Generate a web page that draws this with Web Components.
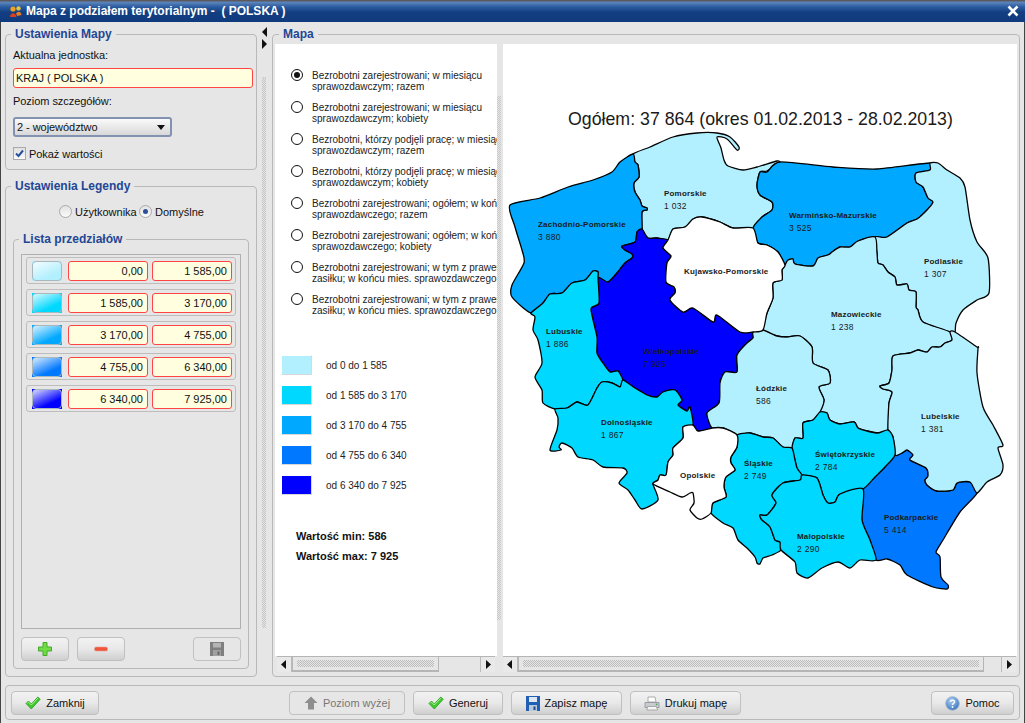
<!DOCTYPE html>
<html lang="pl">
<head>
<meta charset="utf-8">
<title>Mapa z podziałem terytorialnym</title>
<style>
html, body { margin: 0; padding: 0; background: #e6e6e6; }
body { width: 1025px; height: 723px; overflow: hidden; font: 11px "Liberation Sans", sans-serif; color: #111; }
</style>
</head>
<body>
<app-window caption="Mapa z podziałem terytorialnym -  ( POLSKA )">
  <div slot="left" style="display:flex;flex-direction:column;gap:9px;height:100%">
    <group-box caption="Ustawienia Mapy" style="height:143px">
      <settings-map></settings-map>
    </group-box>
    <group-box caption="Ustawienia Legendy" style="flex:1;min-height:0">
      <settings-legend></settings-legend>
    </group-box>
  </div>
  <group-box slot="right" caption="Mapa" style="height:100%" tight>
    <map-panel></map-panel>
  </group-box>
  <footer-bar slot="footer"></footer-bar>
</app-window>

<script>
const FONT = '"Liberation Sans", sans-serif';

// icons used by the buttons
const ICONS = {
  check: `<svg width="16" height="14" viewBox="0 0 16 14"><path d="M1 7.5 L3.5 5 L6.3 8 L12.8 1 L15.2 3.3 L6.3 13 Z" fill="#3fc92f" stroke="#2a9a22" stroke-width=".8" stroke-linejoin="round"/><path d="M2.5 7.2 L3.6 6.2 L6.3 9 L12.8 2.2" fill="none" stroke="#a6f08f" stroke-width="1"/></svg>`,
  plus: `<svg width="16" height="16" viewBox="0 0 16 16"><path d="M6 1.5 H10 V6 H14.5 V10 H10 V14.5 H6 V10 H1.5 V6 H6 Z" fill="#6fdc45" stroke="#45a82b" stroke-linejoin="round"/></svg>`,
  minus: `<svg width="16" height="16" viewBox="0 0 16 16"><rect x="1.5" y="6" width="13" height="4" rx="1.5" fill="#f2553c" stroke="#e0a090" stroke-width=".6"/></svg>`,
  disk: `<svg width="14" height="14" viewBox="0 0 14 14"><path d="M0 0 H14 V14 H0 Z" fill="#7f7f7f"/><rect x="3" y="1" width="8" height="4.5" fill="#b4b4b4"/><rect x="3" y="8" width="8" height="6" fill="#a0a0a0"/><rect x="7.5" y="9.5" width="2" height="3.5" fill="#666"/></svg>`,
  diskBlue: `<svg width="14" height="15" viewBox="0 0 14 15"><path d="M0 0 H14 V15 H0 Z" fill="#1f5fb4"/><rect x="3" y="1" width="8" height="5" fill="#dfe8f2"/><rect x="3" y="9" width="8" height="6" fill="#b8c8da"/><rect x="7.5" y="10.5" width="2" height="3.5" fill="#1b4a8c"/></svg>`,
  up: `<svg width="14" height="14" viewBox="0 0 14 14"><path d="M7 .5 L13.5 7 H10 V13.5 H4 V7 H.5 Z" fill="#8e8e8e"/></svg>`,
  printer: `<svg width="16" height="15" viewBox="0 0 16 15"><path d="M4 1 L11 1 L12 6 H4 Z" fill="#fff" stroke="#9a9a9a" stroke-width=".8"/><path d="M1 6.5 H15 V11.5 H1 Z" fill="#c7ccd0" stroke="#8a8f94" stroke-width=".8"/><path d="M3.5 10.5 H12.5 L13.5 14 H3 Z" fill="#f5f5f5" stroke="#9a9a9a" stroke-width=".8"/><circle cx="12.6" cy="8.3" r=".9" fill="#5a9a5a"/></svg>`,
  help: `<svg width="15" height="15" viewBox="0 0 15 15"><defs><radialGradient id="hb" cx=".4" cy=".3" r=".8"><stop offset="0" stop-color="#a9cdf2"/><stop offset="1" stop-color="#2f6db8"/></radialGradient></defs><circle cx="7.5" cy="7.5" r="6.8" fill="url(#hb)" stroke="#9db6d0"/><path d="M5.4 5.8 C5.6 3.6 9.6 3.6 9.6 5.8 C9.6 7.4 7.5 7.2 7.5 9" fill="none" stroke="#fff" stroke-width="1.5"/><circle cx="7.5" cy="11" r=".95" fill="#fff"/></svg>`
};

class AppWindow extends HTMLElement {
  constructor() {
    super();
    this.attachShadow({ mode: "open" }).innerHTML = `
<style>
:host { display: flex; flex-direction: column; width: 1025px; height: 723px; box-sizing: border-box; background: #e6e6e6; border-left: 1px solid #444; border-right: 1px solid #444; }
.title { height: 22px; flex: none; display: flex; align-items: center; color: #fff; font: bold 12px ${FONT}; white-space: pre; padding: 0 5px 0 9px; gap: 4px;
  background: linear-gradient(#59595f 0, #59595f 1px, #5e87bd 2px, #2a5b9f 7px, #133f82 12px, #0f3a7c 22px); margin-left: -1px; margin-right: -1px; }
.title span { flex: 1; }
.main { flex: 1; display: flex; min-height: 0; padding: 5px 4px 0 4px; }
.left { width: 252px; flex: none; padding-bottom: 8px; }
.split { width: 15px; flex: none; position: relative; }
.split::before { content: ""; display: block; width: 0; height: 0; margin: 0 0 2px 5px; border: 5px solid transparent; border-left: 0; border-right: 5px solid #111; }
.split::after { content: ""; display: block; width: 0; height: 0; margin: 0 0 0 5px; border: 5px solid transparent; border-right: 0; border-left: 5px solid #111; }
.dots { position: absolute; left: 5px; top: 50px; width: 4px; bottom: 57px; background: repeating-conic-gradient(#c4c4c4 0 25%, transparent 0 50%) 0 0 / 2px 2px; }
.right { flex: 1; min-width: 0; padding-bottom: 8px; }
.foot { height: 38px; flex: none; padding: 0 4px 3px; box-sizing: border-box; }
</style>
<div class="title">
  <svg width="13" height="13" viewBox="0 0 13 13"><circle cx="4" cy="4" r="2.6" fill="#f0a020"/><circle cx="9.5" cy="3.4" r="2.2" fill="#e9c53c"/><path d="M1 12 C1 7 7 7 7.5 12 Z" fill="#d8401f"/><path d="M7 9 C8 6 12 6 12.5 10 L8.5 11 Z" fill="#e87a20"/></svg>
  <span>${this.getAttribute("caption")}</span>
  <svg width="14" height="14" viewBox="0 0 14 14"><path d="M2.5 2.5 L11.5 11.5 M11.5 2.5 L2.5 11.5" stroke="#fff" stroke-width="2.6" fill="none"/></svg>
</div>
<div class="main">
  <div class="left"><slot name="left"></slot></div>
  <div class="split"><div class="dots"></div></div>
  <div class="right"><slot name="right"></slot></div>
</div>
<div class="foot"><slot name="footer"></slot></div>`;
  }
}
customElements.define("app-window", AppWindow);

class GroupBox extends HTMLElement {
  constructor() {
    super();
    const tight = this.hasAttribute("tight");
    this.attachShadow({ mode: "open" }).innerHTML = `
<style>
:host { display: block; box-sizing: border-box; }
fieldset { margin: 0; height: 100%; box-sizing: border-box; border: 1px solid #b9b9b9; border-radius: 4px; min-width: 0; padding: ${tight ? "0 2px 3px 2px" : "0 7px 7px 7px"}; }
legend { padding: 0 4px; margin-left: ${tight ? "4px" : "-2px"}; font: bold 12px ${FONT}; color: #1f4795; line-height: 14px; }
</style>
<fieldset><legend>${this.getAttribute("caption")}</legend><slot></slot></fieldset>`;
  }
}
customElements.define("group-box", GroupBox);

class TextField extends HTMLElement {
  constructor() {
    super();
    this.attachShadow({ mode: "open" }).innerHTML = `
<style>
:host { display: block; box-sizing: border-box; height: 20px; background: #ffffdf; border: 1px solid #f44; border-radius: 3px; padding: 0 2px; font: 11px/18px ${FONT}; white-space: nowrap; overflow: hidden; }
:host([num]) { text-align: right; padding-right: 4px; }
</style><slot></slot>`;
  }
}
customElements.define("text-field", TextField);

class CheckRadio extends HTMLElement {
  constructor() {
    super();
    const on = this.hasAttribute("on");
    this.attachShadow({ mode: "open" }).innerHTML = `
<style>
:host { display: inline-flex; align-items: center; gap: 3px; font: 11px ${FONT}; }
i { display: block; width: 13px; height: 13px; box-sizing: border-box; border: 1px solid #a9a9a9; border-radius: 50%; background: linear-gradient(#e2e2e2, #fafafa); position: relative; }
i.on::after { content: ""; position: absolute; left: 3px; top: 3px; width: 5px; height: 5px; border-radius: 50%; background: #2d4f9a; }
</style><i class="${on ? "on" : ""}"></i><slot></slot>`;
  }
}
customElements.define("check-radio", CheckRadio);

class SettingsMap extends HTMLElement {
  constructor() {
    super();
    this.attachShadow({ mode: "open" }).innerHTML = `
<style>
:host { display: block; font: 11px ${FONT}; letter-spacing: -.05px; padding-top: 6px; margin-right: -4px; }
label { display: block; line-height: 16px; }
.sel { width: 159px; height: 20px; box-sizing: border-box; margin: 8px 0 0; border: 2px solid #8392b0; border-radius: 3px; display: flex; align-items: center; justify-content: space-between; padding: 0 5px 0 2px; background: linear-gradient(#fafafa, #d8d8d8); }
.sel b { width: 0; height: 0; border: 4px solid transparent; border-top: 5px solid #111; border-bottom: 0; }
.chk { display: flex; align-items: center; gap: 3px; margin-top: 10px; }
.chk i { width: 13px; height: 13px; box-sizing: border-box; border: 1px solid #aaa; background: linear-gradient(#e0e0e0, #fafafa); display: block; }
.chk svg { display: block; margin: 1px; }
text-field { margin: 5px 0 5px; }
</style>
<label>Aktualna jednostka:</label>
<text-field>KRAJ ( POLSKA )</text-field>
<label style="margin-top:4px">Poziom szczegółów:</label>
<div class="sel"><span>2 - województwo</span><b></b></div>
<div class="chk"><i><svg width="9" height="9" viewBox="0 0 9 9"><path d="M1 4.5 L3.5 7 L8 1.5" fill="none" stroke="#27519c" stroke-width="2"/></svg></i><span>Pokaż wartości</span></div>`;
  }
}
customElements.define("settings-map", SettingsMap);

class RangeRow extends HTMLElement {
  constructor() {
    super();
    const c = this.getAttribute("color");
    this.attachShadow({ mode: "open" }).innerHTML = `
<style>
:host { display: flex; align-items: center; gap: 6px; height: 27px; flex: none; box-sizing: border-box; border: 1px solid #bdbdbd; border-radius: 3px; padding: 0 3px 0 5px; }
.sw { width: 30px; height: 20px; box-sizing: border-box; background: ${c}; }
.sw div { height: 100%; box-sizing: border-box; border: 1px solid #a8b8bc; border-radius: 4px; background: linear-gradient(155deg, rgba(255,255,255,.85) 0%, rgba(255,255,255,0) 70%); }
text-field { width: 80px; }
.f2 { margin-left: -2px; }
</style>
<div class="sw"><div></div></div>
<text-field num>${this.getAttribute("a")}</text-field>
<text-field num class="f2">${this.getAttribute("b")}</text-field>`;
  }
}
customElements.define("range-row", RangeRow);

class IconButton extends HTMLElement {
  constructor() {
    super();
    const off = this.hasAttribute("off");
    this.attachShadow({ mode: "open" }).innerHTML = `
<style>
:host { display: flex; align-items: center; justify-content: center; gap: 5px; box-sizing: border-box; height: 24px; flex: none; border: 1px solid #c0c0c0; border-radius: 4px; font: 11px ${FONT}; color: ${off ? "#777" : "#111"}; background: ${off ? "none" : "linear-gradient(#f2f2f2, #e8e8e8 50%, #cfcfcf)"}; white-space: nowrap; }
svg { display: block; }
</style>${ICONS[this.getAttribute("icon")]}<slot></slot>`;
  }
}
customElements.define("icon-button", IconButton);

class SettingsLegend extends HTMLElement {
  constructor() {
    super();
    const ranges = [
      ["#b3f0ff", "0,00", "1 585,00"], ["#00d8ff", "1 585,00", "3 170,00"],
      ["#00a8ff", "3 170,00", "4 755,00"], ["#0078ff", "4 755,00", "6 340,00"],
      ["#0000ff", "6 340,00", "7 925,00"]
    ];
    this.attachShadow({ mode: "open" }).innerHTML = `
<style>
:host { display: block; font: 11px ${FONT}; }
.radios { display: flex; padding: 12px 0 14px 46px; }
.radios check-radio:first-child { width: 80px; }
group-box { height: 437px; }
.wrap { padding-top: 8px; }
.list { height: 375px; box-sizing: border-box; border: 1px solid #b0b0b0; padding: 2px 4px; display: flex; flex-direction: column; gap: 5px; }
.btns { display: flex; gap: 8px; margin-top: 8px; }
.btns icon-button { width: 48px; }
.btns icon-button:last-child { margin-left: auto; }
</style>
<div class="radios"><check-radio>Użytkownika</check-radio><check-radio on>Domyślne</check-radio></div>
<group-box caption="Lista przedziałów">
  <div class="wrap">
    <div class="list">${ranges.map(r => `<range-row color="${r[0]}" a="${r[1]}" b="${r[2]}"></range-row>`).join("")}</div>
    <div class="btns"><icon-button icon="plus"></icon-button><icon-button icon="minus"></icon-button><icon-button icon="disk" off></icon-button></div>
  </div>
</group-box>`;
  }
}
customElements.define("settings-legend", SettingsLegend);

class HScroll extends HTMLElement {
  constructor() {
    super();
    const arrow = d => `<svg width="7" height="9" viewBox="0 0 7 9"><path d="${d}" fill="#111"/></svg>`;
    this.attachShadow({ mode: "open" }).innerHTML = `
<style>
:host { display: flex; height: 16px; flex: none; box-sizing: border-box; border-top: 1px solid #b5b5b5; background: #e6e6e6; }
.b { width: 15px; flex: none; display: flex; align-items: center; justify-content: center; background: #e9e9e9; box-sizing: border-box; border-right: 1px solid #bbb; }
.b:last-child { border-right: 0; border-left: 1px solid #bbb; }
.track { flex: 1; display: flex; min-width: 0; }
.thumb { box-sizing: border-box; border: 1px solid #b5b5b5; border-top: 0; border-bottom-width: 2px; padding: 3px 4px; }
.thumb div { height: 100%; background: repeating-conic-gradient(#bdbdbd 0 25%, transparent 0 50%) 0 0 / 2px 2px; }
</style>
<div class="b">${arrow("M5 0 V9 L0 4.5 Z")}</div>
<div class="track"><div class="thumb" style="width:${this.getAttribute("thumb")}"><div></div></div></div>
<div class="b">${arrow("M1 0 V9 L6 4.5 Z")}</div>`;
  }
}
customElements.define("h-scroll", HScroll);

class MeasureList extends HTMLElement {
  constructor() {
    super();
    const items = [
      ["Bezrobotni zarejestrowani; w miesiącu", "sprawozdawczym; razem"],
      ["Bezrobotni zarejestrowani; w miesiącu", "sprawozdawczym; kobiety"],
      ["Bezrobotni, którzy podjęli pracę; w miesiącu", "sprawozdawczym; razem"],
      ["Bezrobotni, którzy podjęli pracę; w miesiącu", "sprawozdawczym; kobiety"],
      ["Bezrobotni zarejestrowani; ogółem; w końcu mies.", "sprawozdawczego; razem"],
      ["Bezrobotni zarejestrowani; ogółem; w końcu mies.", "sprawozdawczego; kobiety"],
      ["Bezrobotni zarejestrowani; w tym z prawem do", "zasiłku; w końcu mies. sprawozdawczego"],
      ["Bezrobotni zarejestrowani; w tym z prawem do", "zasiłku; w końcu mies. sprawozdawczego"]
    ];
    const legend = [["#b3f0ff", "od 0 do 1 585"], ["#00d8ff", "od 1 585 do 3 170"], ["#00a8ff", "od 3 170 do 4 755"], ["#0078ff", "od 4 755 do 6 340"], ["#0000ff", "od 6 340 do 7 925"]];
    this.attachShadow({ mode: "open" }).innerHTML = `
<style>
:host { display: block; height: 100%; box-sizing: border-box; overflow: hidden; padding: 26px 0 0 6px; font: 10px/11px "Liberation Sans", sans-serif; color: #222; white-space: nowrap; }
.opts { display: flex; flex-direction: column; gap: 10px; padding-left: 10px; }
.opt { display: flex; gap: 9px; align-items: flex-start; }
.opt i { width: 12px; height: 12px; margin-top: -1px; flex: none; box-sizing: border-box; border: 1px solid #111; border-radius: 50%; position: relative; }
.opt i.on::after { content: ""; position: absolute; left: 2px; top: 2px; width: 6px; height: 6px; border-radius: 50%; background: #111; }
.legend { margin-top: 39px; display: flex; flex-direction: column; gap: 10px; }
.row { display: flex; align-items: center; gap: 14px; height: 20px; }
.row u { display: block; width: 31px; height: 20px; box-sizing: border-box; border: 1px solid; border-color: transparent #d8d8d8 #d8d8d8 transparent; background-clip: padding-box; }
.min { margin: 31px 0 0 15px; font-weight: bold; font-size: 11px; line-height: 20px; color: #111; }
</style>
<div class="opts">${items.map((t, i) => `<div class="opt"><i class="${i ? "" : "on"}"></i><div>${t[0]}<br>${t[1]}</div></div>`).join("")}</div>
<div class="legend">${legend.map(l => `<div class="row"><u style="background-color:${l[0]}"></u><span>${l[1]}</span></div>`).join("")}</div>
<div class="min">Wartość min: 586<br>Wartość max: 7 925</div>`;
  }
}
customElements.define("measure-list", MeasureList);

// region outlines in window pixels; the svg viewBox starts at the map panel corner
const C0 = "#b3f0ff", C1 = "#00d8ff", C2 = "#00a8ff", C3 = "#0078ff", C4 = "#0000ff";
const REGIONS = [
  [C0, "Pomorskie", "1 032", 664, 195, "633,154 650,147 673,137 697,133 717,133 730,137 739,147 737,150 727,139 717,137 721,148 724,160 728,166 743,170 757,167 777,161 779,163 767,171 760,172 757,185 760,195 772,202 772,210 762,217 753,228 733,228 720,222 702,217 693,219 685,227 673,229 668,240 657,238 648,238 642,229 642,212 647,210 647,208 642,206 640,200 635,192 634,183 639,177 638,165 635,162"],
  [C2, "Zachodnio-Pomorskie", "3 880", 538, 226, "510,205 540,198 568,187 593,180 612,172 620,162 633,154 635,162 638,165 639,177 634,183 635,192 640,200 642,206 647,208 647,210 642,212 642,229 637,232 635,242 622,246 625,250 632,254 632,258 625,263 617,273 608,282 598,278 598,272 593,271 585,280 572,283 562,293 550,294 543,303 531,313 512,297 512,285 524,263 522,250 515,227"],
  [C2, "Warmińsko-Mazurskie", "3 525", 789, 217, "780,162 833,167 877,169 930,163 930,170 916,173 916,182 923,187 928,198 933,202 927,210 917,219 907,223 887,237 875,237 858,241 850,247 840,247 832,252 828,255 818,258 813,266 795,264 793,259 788,260 785,265 778,252 767,245 758,243 753,228 762,217 772,210 772,202 760,195 757,185 760,172 767,172"],
  [C0, "Podlaskie", "1 307", 924, 263, "930,163 938,163 947,170 960,178 965,187 970,220 977,242 988,258 989,293 977,300 963,310 956,323 955,332 950,332 923,322 918,310 916,307 916,292 909,290 907,284 897,285 895,277 888,272 883,265 878,263 877,253 875,237 887,237 907,223 917,219 927,210 933,202 928,198 923,187 916,182 916,173 930,170"],
  [C0, "Mazowieckie", "1 238", 831, 316, "785,265 788,260 793,259 795,264 813,266 818,258 828,255 832,252 840,247 850,247 858,241 875,237 877,253 878,263 883,265 888,272 895,277 897,285 907,284 909,290 916,292 916,307 918,310 923,322 950,332 952,340 945,343 940,347 932,347 927,352 918,350 910,353 893,356 892,370 889,383 880,386 883,389 892,392 889,403 888,430 878,433 867,431 858,428 854,422 840,424 830,420 827,413 820,412 824,400 819,387 830,383 828,370 813,363 812,347 800,336 787,337 777,336 763,330 767,313 773,298 773,283 782,280 782,270"],
  [C4, "Wielkopolskie", "7 925", 643, 353, "642,229 648,238 657,238 668,240 663,248 671,256 667,263 666,282 674,287 675,293 670,300 683,312 693,308 713,322 717,315 740,332 753,332 753,338 747,343 737,355 737,372 725,372 720,383 719,403 707,413 712,428 698,431 693,425 690,407 687,411 678,405 682,400 675,390 663,392 657,397 647,395 635,388 623,380 618,371 610,372 603,363 597,353 597,337 591,309 599,303 598,278 608,282 617,273 625,263 632,258 632,254 625,250 622,246 635,242 637,232"],
  [C1, "Lubuskie", "1 886", 546, 333, "531,313 543,303 550,294 562,293 572,283 585,280 593,271 598,272 598,278 599,303 591,309 597,337 597,353 603,363 610,372 618,371 623,380 623,387 620,387 612,383 602,382 597,388 588,405 577,402 567,408 555,409 543,403 542,390 535,377 542,363 538,340 533,330 535,317"],
  [C1, "Dolnośląskie", "1 867", 601, 424, "555,409 567,408 577,402 588,405 597,388 602,382 612,383 620,387 623,380 635,388 647,395 657,397 663,392 675,390 682,400 678,405 687,411 690,407 693,425 683,427 683,438 673,448 673,455 668,462 666,475 660,475 658,480 653,484 658,500 642,509 635,500 628,490 619,483 627,473 623,468 603,467 593,460 578,457 572,448 562,443 559,447 561,450 550,450 557,430 558,418"],
  [C3, "Podkarpackie", "5 414", 884, 519, "895,455 902,453 907,450 913,455 910,460 926,468 928,476 925,480 927,485 937,491 953,490 957,483 970,482 977,493 960,512 943,540 936,552 940,557 941,577 948,585 947,589 933,587 907,575 900,565 887,559 876,560 870,540 862,520 863,489 875,477 885,467"],
  [C0, "Lubelskie", "1 381", 921, 418, "955,332 977,347 978,348 977,373 983,407 993,425 1003,445 998,448 1003,465 1000,475 987,482 977,493 970,482 957,483 953,490 937,491 927,485 925,480 928,476 926,468 910,460 913,455 907,450 902,453 895,455 893,437 888,430 889,403 892,392 883,389 880,386 889,383 892,370 893,356 910,353 918,350 927,352 932,347 940,347 945,343 952,340 950,332"],
  [C0, "Łódzkie", "586", 756, 390, "763,330 777,336 787,337 800,336 812,347 813,363 828,370 830,383 819,387 824,400 820,412 813,420 803,423 803,438 795,438 792,448 783,447 773,438 763,437 750,433 737,435 732,432 723,428 712,428 707,413 719,403 720,383 725,372 737,372 737,355 747,343 753,338 753,332"],
  [C1, "Świętokrzyskie", "2 784", 815, 456, "820,412 827,413 830,420 840,424 854,422 858,428 867,431 878,433 888,430 893,437 895,455 885,467 875,477 863,489 840,494 835,502 828,503 823,495 817,478 802,475 797,468 795,460 792,448 795,438 803,438 803,423 813,420"],
  [C1, "Śląskie", "2 749", 744, 465, "737,435 750,433 763,437 773,438 783,447 792,448 795,460 797,468 802,475 800,480 783,483 772,495 776,503 767,515 760,515 762,520 770,527 775,540 780,542 781,550 772,555 763,558 760,564 757,563 755,557 747,548 738,540 733,528 723,523 711,513 713,503 726,497 724,487 726,477 735,470 731,463 731,457 737,447"],
  [C1, "Małopolskie", "2 290", 797, 538, "802,475 817,478 823,495 828,503 835,502 840,494 863,489 862,520 870,540 876,560 860,560 850,568 838,562 822,568 808,578 797,573 795,562 781,550 780,542 775,540 770,527 762,520 760,515 767,515 776,503 772,495 783,483 800,480"],
  ["#ffffff", "Kujawsko-Pomorskie", "", 684, 273, "668,240 673,229 685,227 693,219 702,217 720,222 733,228 753,228 758,243 767,245 778,252 785,265 782,270 782,280 773,283 773,298 767,313 763,330 753,332 740,332 717,315 713,322 693,308 683,312 670,300 675,293 674,287 666,282 667,263 671,256 663,248"],
  ["#ffffff", "Opolskie", "", 680, 477, "683,427 693,425 698,431 712,428 723,428 737,435 737,447 731,457 731,463 735,470 726,477 724,487 726,497 713,503 711,513 702,519 697,518 690,510 694,503 693,493 690,493 682,497 670,492 653,484 658,480 660,475 666,475 668,462 673,455 673,448 683,438"]
];

// closed spline through the outline points, so neighbouring regions keep their shared corners
function outlinePath(points) {
  const p = points.split(" ").map(s => s.split(",").map(Number));
  const n = p.length;
  let d = `M${p[0][0]} ${p[0][1]}`;
  for (let i = 0; i < n; i++) {
    const a = p[(i - 1 + n) % n], b = p[i], c = p[(i + 1) % n], e = p[(i + 2) % n];
    const k = 0.12;
    d += `C${(b[0] + (c[0] - a[0]) * k).toFixed(1)} ${(b[1] + (c[1] - a[1]) * k).toFixed(1)} ${(c[0] - (e[0] - b[0]) * k).toFixed(1)} ${(c[1] - (e[1] - b[1]) * k).toFixed(1)} ${c[0]} ${c[1]}`;
  }
  return d + "Z";
}

class PolandMap extends HTMLElement {
  constructor() {
    super();
    const shapes = REGIONS.map(r => `<path d="${outlinePath(r[5])}" fill="${r[0]}"/>`).join("");
    const labels = REGIONS.map(r => `<text class="n" x="${r[3]}" y="${r[4] + 1}">${r[1]}</text>` + (r[2] ? `<text class="v" x="${r[3]}" y="${r[4] + 14}">${r[2]}</text>` : "")).join("");
    this.attachShadow({ mode: "open" }).innerHTML = `
<style>
:host { display: block; background: #fff; overflow: hidden; }
svg { display: block; }
path { stroke: #000; stroke-width: 1.3; stroke-linejoin: round; }
text { font-family: "Liberation Sans", sans-serif; fill: #1a1a1a; }
.n { font-size: 8px; font-weight: bold; letter-spacing: .2px; }
.v { font-size: 8.5px; letter-spacing: .3px; }
.t { font-size: 17.75px; }
</style>
<svg width="514" height="612" viewBox="503 44 514 612">
  <text class="t" x="568" y="125">Ogółem: 37 864 (okres 01.02.2013 - 28.02.2013)</text>
  ${shapes}
  ${labels}
</svg>`;
  }
}
customElements.define("poland-map", PolandMap);

class MapPanel extends HTMLElement {
  constructor() {
    super();
    this.attachShadow({ mode: "open" }).innerHTML = `
<style>
:host { display: flex; height: 628px; margin-top: 3px; }
.col { display: flex; flex-direction: column; min-width: 0; }
.body { flex: 1; min-height: 0; background: #fff; }
.a { width: 222px; flex: none; }
.a h-scroll { margin: 0 2px; }
.gap { width: 6px; flex: none; background: #e6e6e6; position: relative; }
.gap::after { content: ""; position: absolute; left: 0; top: 52px; width: 4px; bottom: 52px; background: repeating-conic-gradient(#c8c8c8 0 25%, transparent 0 50%) 0 0 / 2px 2px; }
.b { flex: 1; }
.b h-scroll { margin-right: 1px; }
poland-map { flex: 1; min-height: 0; }
</style>
<div class="col a"><measure-list class="body"></measure-list><h-scroll thumb="147px"></h-scroll></div>
<div class="gap"></div>
<div class="col b"><poland-map></poland-map><h-scroll thumb="466px"></h-scroll></div>`;
  }
}
customElements.define("map-panel", MapPanel);

class FooterBar extends HTMLElement {
  constructor() {
    super();
    this.attachShadow({ mode: "open" }).innerHTML = `
<style>
:host { display: flex; height: 35px; box-sizing: border-box; border: 1px solid #b9b9b9; border-radius: 4px; padding: 5px; gap: 8px; }
.s { flex: 1; }
</style>
<icon-button icon="check" style="width:88px">Zamknij</icon-button>
<div style="width:174px"></div>
<icon-button icon="up" off style="width:116px">Poziom wyżej</icon-button>
<icon-button icon="check" style="width:90px">Generuj</icon-button>
<icon-button icon="diskBlue" style="width:111px">Zapisz mapę</icon-button>
<icon-button icon="printer" style="width:111px">Drukuj mapę</icon-button>
<div class="s"></div>
<icon-button icon="help" style="width:83px">Pomoc</icon-button>`;
  }
}
customElements.define("footer-bar", FooterBar);
</script>
</body>
</html>
